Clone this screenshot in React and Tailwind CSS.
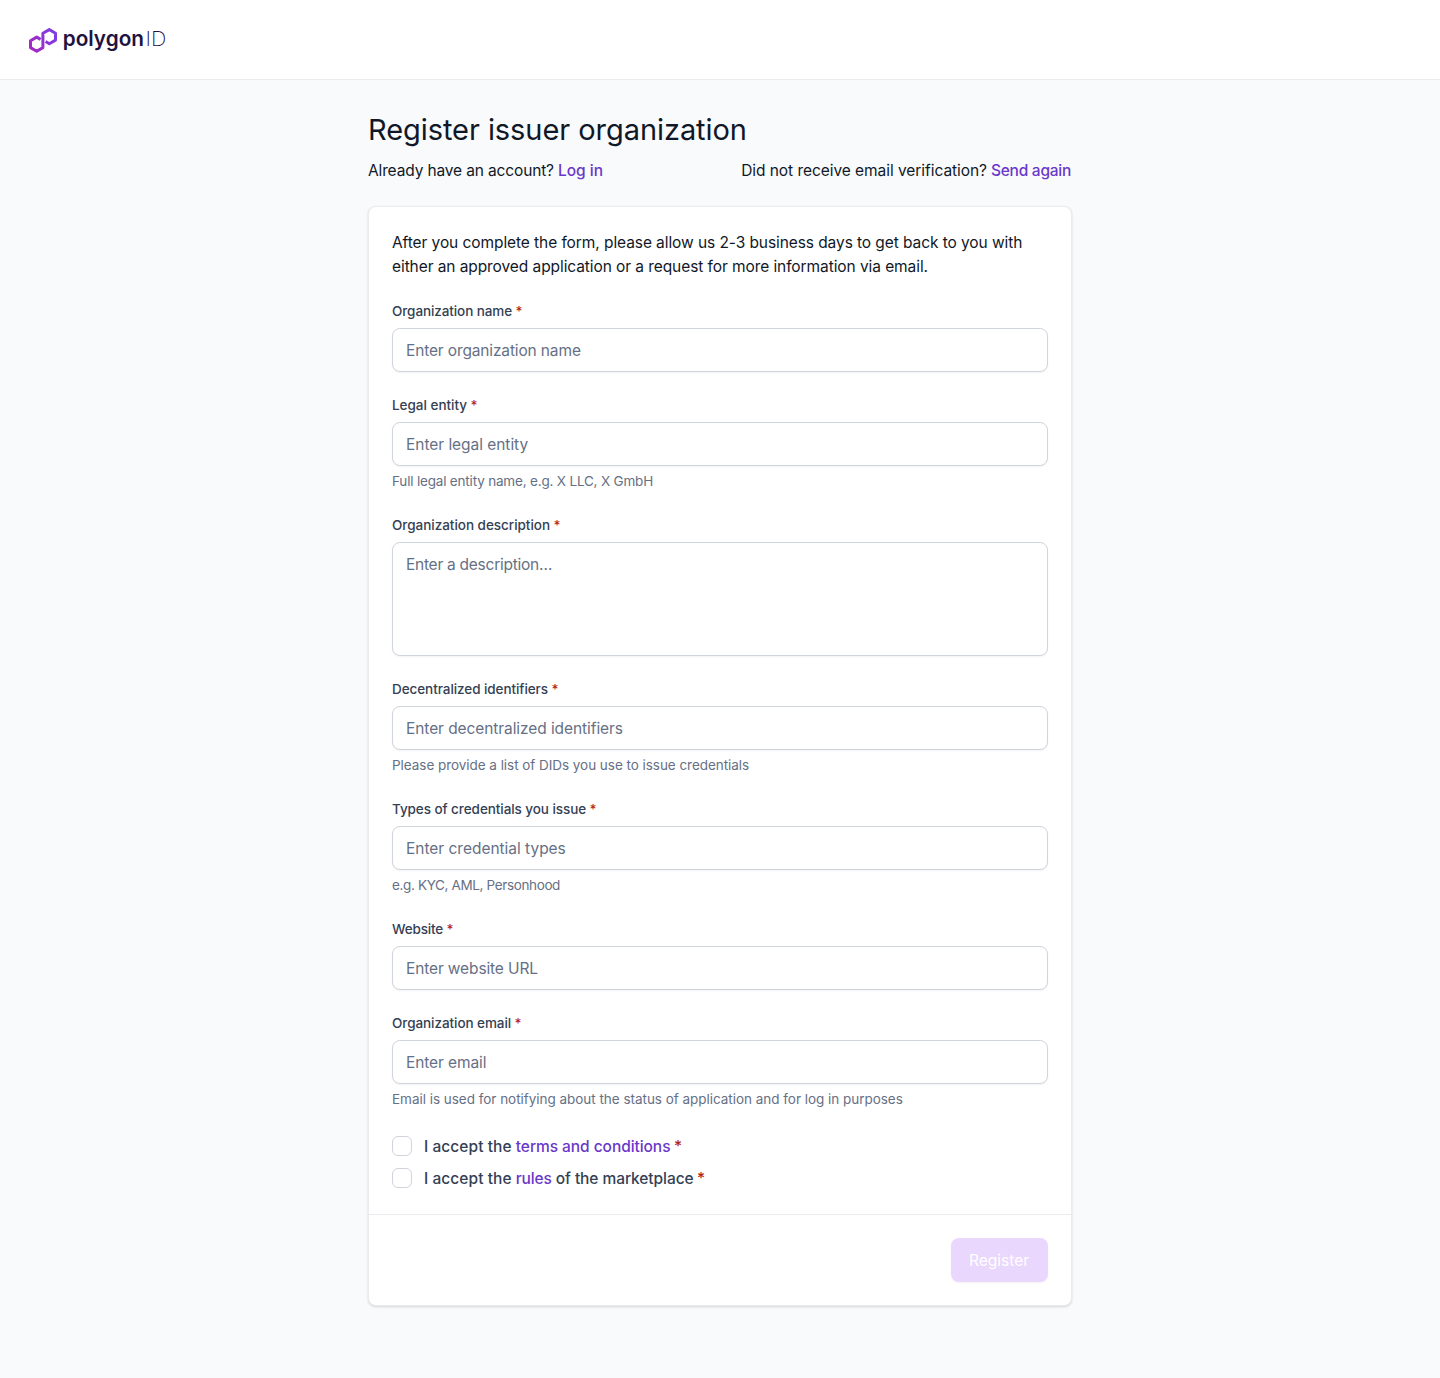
import React from "react";

const fields = [
  { label: "Organization name", labelCls: "tracking-[-0.1px]", placeholder: "Enter organization name", phCls: "tracking-[-0.14px]" },
  { label: "Legal entity", labelCls: "tracking-[-0.02px]", placeholder: "Enter legal entity", phCls: "tracking-[-0.04px]", help: "Full legal entity name, e.g. X LLC, X GmbH", helpCls: "tracking-[-0.185px]" },
  { label: "Organization description", labelCls: "tracking-[-0.03px]", placeholder: "Enter a description…", phCls: "tracking-[-0.26px]", multiline: true },
  { label: "Decentralized identifiers", labelCls: "tracking-[-0.07px]", placeholder: "Enter decentralized identifiers", phCls: "tracking-[-0.08px]", help: "Please provide a list of DIDs you use to issue credentials", helpCls: "tracking-[-0.045px]" },
  { label: "Types of credentials you issue", labelCls: "tracking-[-0.07px]", placeholder: "Enter credential types", phCls: "tracking-[-0.02px]", help: "e.g. KYC, AML, Personhood", helpCls: "tracking-[-0.36px]" },
  { label: "Website", labelCls: "tracking-[-0.16px]", placeholder: "Enter website URL", phCls: "tracking-[-0.13px]" },
  { label: "Organization email", labelCls: "tracking-[-0.07px]", placeholder: "Enter email", phCls: "tracking-[-0.1px]", help: "Email is used for notifying about the status of application and for log in purposes", helpCls: "tracking-[-0.03px]" },
];

function Logo() {
  return (
    <svg width="140" height="32" viewBox="28 24 140 32" className="block" aria-label="polygon ID">
      <defs>
        <linearGradient id="mark" gradientUnits="userSpaceOnUse" x1="29" y1="48" x2="57" y2="33">
          <stop offset="0" stopColor="#a726c1" />
          <stop offset="1" stopColor="#7b3fe4" />
        </linearGradient>
      </defs>
      <path
        d="M40.6 39.4 36.7 37.1 30.5 40.7V47.6L36.7 51.2 42.9 47.6V33.2L49.3 29.6 55.5 33.2V40.1L49.3 43.7 45.6 41.5"
        fill="none"
        stroke="url(#mark)"
        strokeWidth="3"
        strokeLinejoin="round"
      />
      <text x="62.7" y="45.5" textLength="81.3" lengthAdjust="spacingAndGlyphs" fill="#22123f" className="font-[Inter] text-[21px] font-semibold">polygon</text>
      <text x="145.5" y="45.5" textLength="20.8" lengthAdjust="spacingAndGlyphs" fill="#22123f" className="font-[Inter] text-[20.5px] font-extralight">ID</text>
    </svg>
  );
}

function Star() {
  return <span className="ml-[3.5px] text-[#b42318]">*</span>;
}

function Field({ label, labelCls, placeholder, phCls, help, helpCls, multiline }) {
  const box = "block w-full rounded-lg border border-[#d0d5dd] bg-white px-[13px] text-[15.5px] leading-6 placeholder:text-[#667085] shadow-[0_1px_2px_rgba(16,24,40,0.05)] outline-none";
  return (
    <div>
      <label className="block h-5 text-[13.5px] leading-[18px] font-medium text-[#344054]">
        <span className={labelCls}>{label}</span>
        <Star />
      </label>
      {multiline ? (
        <textarea className={`${box} ${phCls} mt-1.5 h-[114px] resize-none py-2.5`} placeholder={placeholder} />
      ) : (
        <input className={`${box} ${phCls} mt-1.5 h-11`} placeholder={placeholder} />
      )}
      {help && (
        <p className="mt-1.5 h-5 text-[13.5px] leading-[18px] text-[#667085]">
          <span className={helpCls}>{help}</span>
        </p>
      )}
    </div>
  );
}

function Check({ children }) {
  return (
    <label className="flex h-6 items-center gap-3 text-[15.5px] leading-6 font-medium text-[#344054]">
      <span className="size-5 rounded-md border border-[#d0d5dd] bg-white" />
      <span className="pt-px whitespace-nowrap">{children}</span>
    </label>
  );
}

export default function App() {
  return (
    <div className="min-h-[1378px] bg-[#f9fafb] font-[Inter,sans-serif] text-[15.5px] leading-6 text-[#101828]">
      <header className="flex h-20 items-center border-b border-[#eaecf0] bg-white px-7">
        <Logo />
      </header>
      <main className="mx-auto w-[704px] pt-[31px]">
        <h1 className="text-[29px] leading-[38px] font-normal tracking-[-0.06px]">Register issuer organization</h1>
        <div className="mt-2.5 flex justify-between whitespace-nowrap">
          <p>
            <span className="tracking-[-0.14px]">Already have an account?</span>
            <a className="ml-1 font-medium text-[#6938c9]">Log in</a>
          </p>
          <p className="pr-px">
            <span className="tracking-[-0.05px]">Did not receive email verification?</span>
            <a className="ml-1 font-medium tracking-[-0.26px] text-[#6938c9]">Send again</a>
          </p>
        </div>
        <section className="mt-[23px] rounded-lg border border-[#eaecf0] bg-white shadow-[0_1px_3px_rgba(16,24,40,0.1),0_1px_2px_rgba(16,24,40,0.06)]">
          <div className="flex flex-col gap-6 px-[23px] pt-6 pb-6">
            <p className="-mb-px whitespace-nowrap tracking-[-0.08px]">
              After you complete the form, please allow us 2-3 business days to get back to you with
              <br />
              either an approved application or a request for more information via email.
            </p>
            {fields.map((f) => <Field key={f.label} {...f} />)}
            <div className="flex flex-col gap-2">
              <Check>
                <span className="tracking-[0.06px]">I accept the </span>
                <a className="tracking-[-0.06px] text-[#6938c9]">terms and conditions</a>
                <Star />
              </Check>
              <Check>
                <span className="tracking-[0.06px]">I accept the </span>
                <a className="tracking-[-0.16px] text-[#6938c9]">rules</a>
                <span className="tracking-[-0.07px]"> of the marketplace</span>
                <Star />
              </Check>
            </div>
          </div>
          <div className="flex justify-end border-t border-[#eaecf0] px-[23px] pt-[23px] pb-[23px]">
            <button className="h-11 w-[97px] rounded-lg bg-[#e9d7fe] pt-px pr-px text-[15.5px] font-normal text-white shadow-[0_1px_2px_rgba(16,24,40,0.05)]">Register</button>
          </div>
        </section>
      </main>
    </div>
  );
}
